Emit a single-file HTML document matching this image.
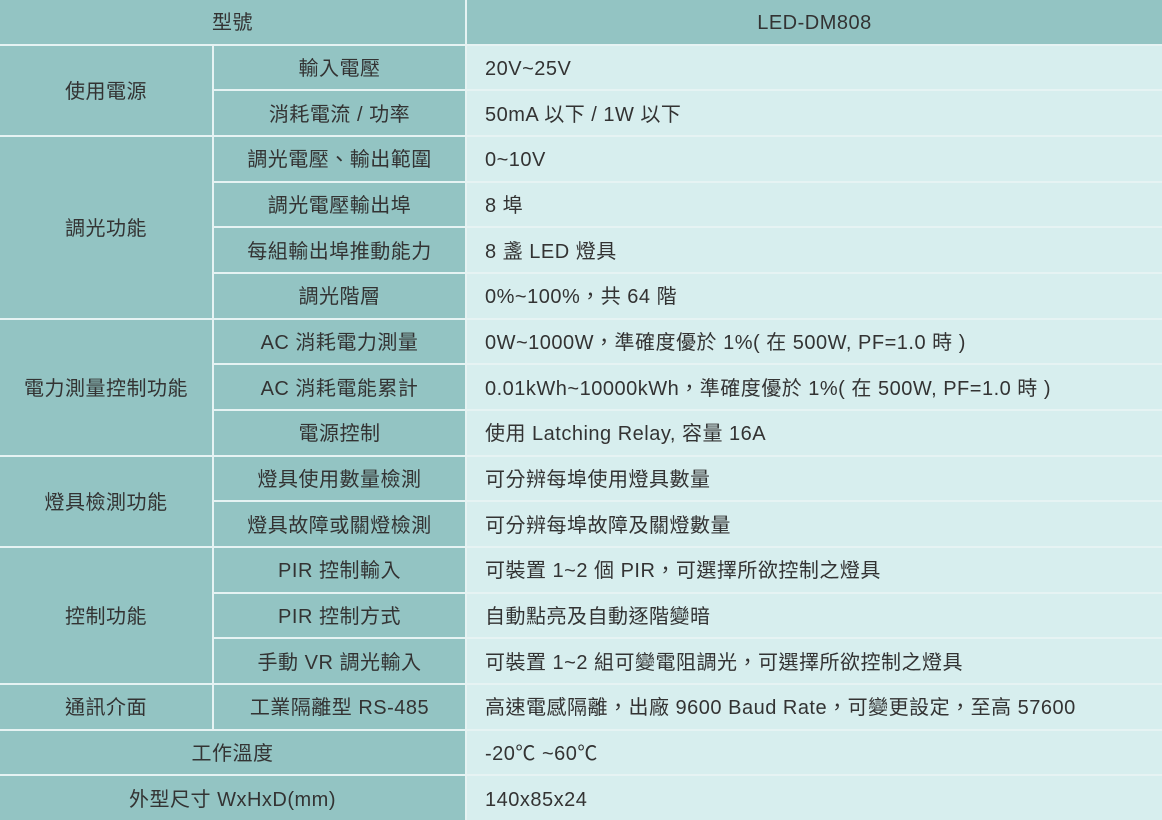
<!DOCTYPE html>
<html><head><meta charset="utf-8"><style>
html,body{margin:0;padding:0;background:#fff;}
table{border-collapse:collapse;width:1162px;height:820px;table-layout:fixed;font-family:"Liberation Sans","Noto Sans CJK TC",sans-serif;font-size:20px;letter-spacing:0.5px;color:#333;}
td{border:2px solid #e6f3f3;padding:3px 0 0 0;height:40.5px;line-height:22px;vertical-align:middle;white-space:nowrap;}
td.h{background:#93c4c3;text-align:center;}
td.v{background:#d7eeee;padding-left:18px;}
tr:first-child td{border-top:none;}
tr:last-child td{border-bottom:none;}
td:first-child{border-left:none;}
td:last-child{border-right:none;}
</style></head><body>
<table>
<colgroup><col style="width:213px"><col style="width:253px"><col></colgroup>
<tr><td class="h" colspan="2">型號</td><td class="h">LED-DM808</td></tr>
<tr><td class="h" rowspan="2">使用電源</td><td class="h">輸入電壓</td><td class="v">20V~25V</td></tr>
<tr><td class="h">消耗電流 / 功率</td><td class="v">50mA 以下 / 1W 以下</td></tr>
<tr><td class="h" rowspan="4">調光功能</td><td class="h">調光電壓、輸出範圍</td><td class="v">0~10V</td></tr>
<tr><td class="h">調光電壓輸出埠</td><td class="v">8 埠</td></tr>
<tr><td class="h">每組輸出埠推動能力</td><td class="v">8 盞 LED 燈具</td></tr>
<tr><td class="h">調光階層</td><td class="v">0%~100%，共 64 階</td></tr>
<tr><td class="h" rowspan="3">電力測量控制功能</td><td class="h">AC 消耗電力測量</td><td class="v">0W~1000W，準確度優於 1%( 在 500W, PF=1.0 時 )</td></tr>
<tr><td class="h">AC 消耗電能累計</td><td class="v">0.01kWh~10000kWh，準確度優於 1%( 在 500W, PF=1.0 時 )</td></tr>
<tr><td class="h">電源控制</td><td class="v">使用 Latching Relay, 容量 16A</td></tr>
<tr><td class="h" rowspan="2">燈具檢測功能</td><td class="h">燈具使用數量檢測</td><td class="v">可分辨每埠使用燈具數量</td></tr>
<tr><td class="h">燈具故障或關燈檢測</td><td class="v">可分辨每埠故障及關燈數量</td></tr>
<tr><td class="h" rowspan="3">控制功能</td><td class="h">PIR 控制輸入</td><td class="v">可裝置 1~2 個 PIR，可選擇所欲控制之燈具</td></tr>
<tr><td class="h">PIR 控制方式</td><td class="v">自動點亮及自動逐階變暗</td></tr>
<tr><td class="h">手動 VR 調光輸入</td><td class="v">可裝置 1~2 組可變電阻調光，可選擇所欲控制之燈具</td></tr>
<tr><td class="h">通訊介面</td><td class="h">工業隔離型 RS-485</td><td class="v">高速電感隔離，出廠 9600 Baud Rate，可變更設定，至高 57600</td></tr>
<tr><td class="h" colspan="2">工作溫度</td><td class="v">-20℃ ~60℃</td></tr>
<tr><td class="h" colspan="2">外型尺寸 WxHxD(mm)</td><td class="v">140x85x24</td></tr>
</table>
</body></html>
